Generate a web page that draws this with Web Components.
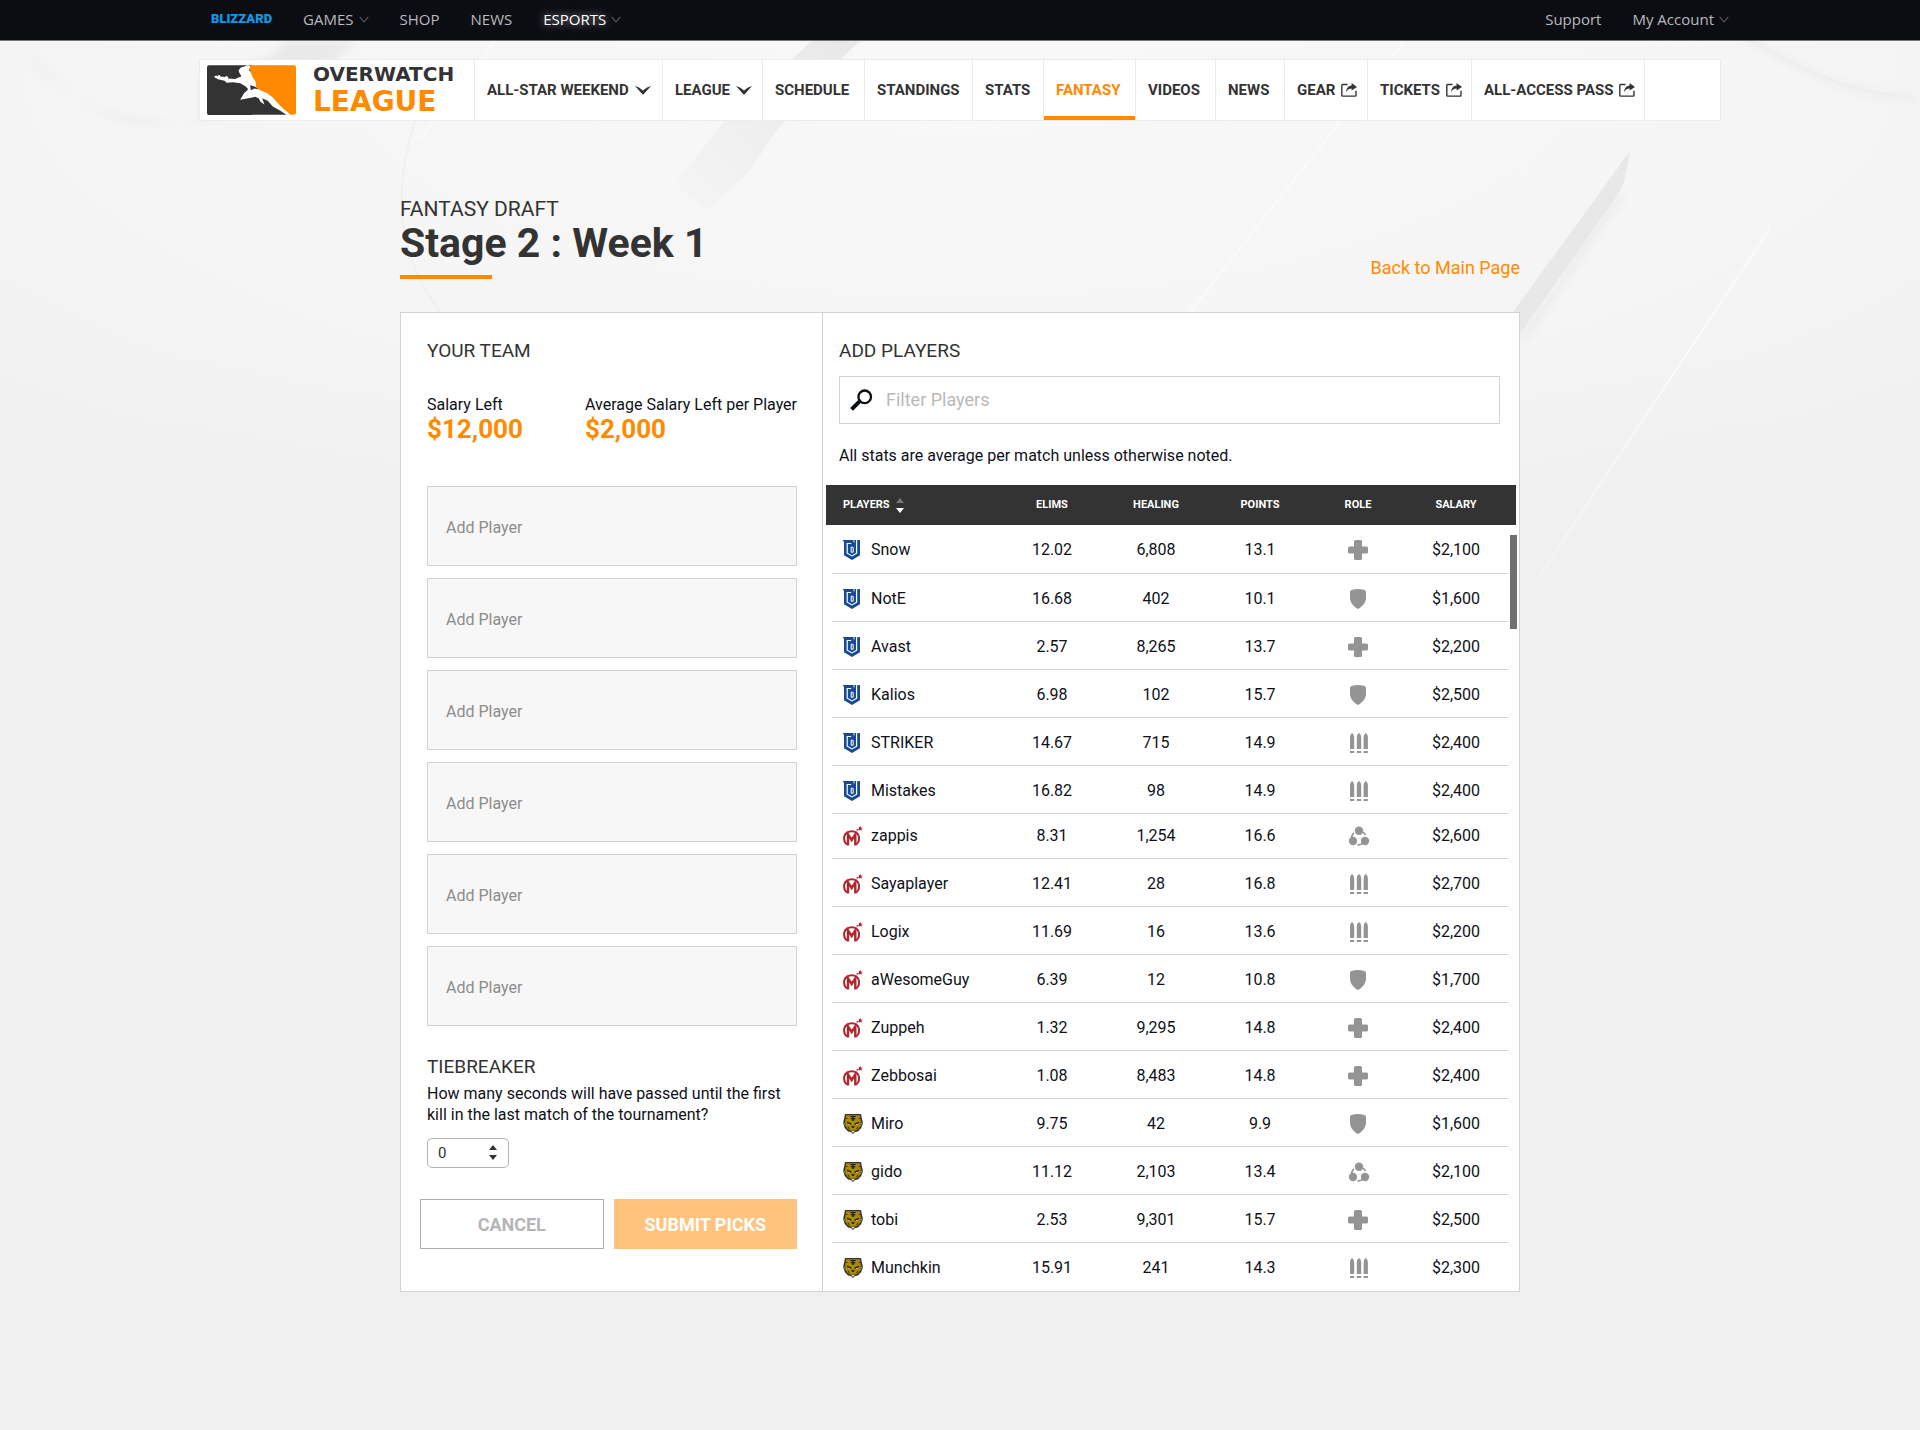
<!DOCTYPE html>
<html lang="en">
<head>
<meta charset="utf-8">
<meta name="viewport" content="width=device-width, initial-scale=1">
<title>Fantasy Draft - Overwatch League</title>
<style>
    html { background: #f0f0f0; }
    body {
        margin: 0;
        min-height: 100vh;
        font-family: Roboto, "Liberation Sans", sans-serif;
        font-size: 16px;
        line-height: 20px;
        color: #0f1118;
        --orange: #ff8a00;
        --dark: #333;
        --line: #d2d2d2;
    }
</style>
</head>
<body>
<fantasy-page></fantasy-page>

<script>
const NAV = [
    { label: "ALL-STAR WEEKEND", icon: "down" },
    { label: "LEAGUE", icon: "down" },
    { label: "SCHEDULE" },
    { label: "STANDINGS" },
    { label: "STATS" },
    { label: "FANTASY", active: true },
    { label: "VIDEOS" },
    { label: "NEWS" },
    { label: "GEAR", icon: "share" },
    { label: "TICKETS", icon: "share" },
    { label: "ALL-ACCESS PASS", icon: "share" }
];

const PLAYERS = [
    ["boston", "Snow", "12.02", "6,808", "13.1", "support", "$2,100"],
    ["boston", "NotE", "16.68", "402", "10.1", "tank", "$1,600"],
    ["boston", "Avast", "2.57", "8,265", "13.7", "support", "$2,200"],
    ["boston", "Kalios", "6.98", "102", "15.7", "tank", "$2,500"],
    ["boston", "STRIKER", "14.67", "715", "14.9", "offense", "$2,400"],
    ["boston", "Mistakes", "16.82", "98", "14.9", "offense", "$2,400"],
    ["florida", "zappis", "8.31", "1,254", "16.6", "flex", "$2,600"],
    ["florida", "Sayaplayer", "12.41", "28", "16.8", "offense", "$2,700"],
    ["florida", "Logix", "11.69", "16", "13.6", "offense", "$2,200"],
    ["florida", "aWesomeGuy", "6.39", "12", "10.8", "tank", "$1,700"],
    ["florida", "Zuppeh", "1.32", "9,295", "14.8", "support", "$2,400"],
    ["florida", "Zebbosai", "1.08", "8,483", "14.8", "support", "$2,400"],
    ["seoul", "Miro", "9.75", "42", "9.9", "tank", "$1,600"],
    ["seoul", "gido", "11.12", "2,103", "13.4", "flex", "$2,100"],
    ["seoul", "tobi", "2.53", "9,301", "15.7", "support", "$2,500"],
    ["seoul", "Munchkin", "15.91", "241", "14.3", "offense", "$2,300"]
];

const ICONS = {
    thin: `<svg width="10" height="7" viewBox="0 0 10 7"><path d="M.7.8 5 6 9.3.8" fill="none" stroke="#5a5c62" stroke-width="1.1"/></svg>`,
    down: `<svg width="16" height="9" viewBox="0 0 16 9"><path d="M0 0 4 1.4 8 4.6 12 1.4 16 0 8.4 8.6h-.8z" fill="#333"/></svg>`,
    share: `<svg width="16" height="14" viewBox="0 0 16 14"><path d="M6.500 1.500H1.600q-.8 0-.8.8v10q0 .8.8.8h12.600q.8 0 .8-.8V7.800" fill="none" stroke="#333" stroke-width="1.400"/><path d="M10.600 0 16 4l-5.400 3.600V5.600C8 5.600 6.300 6.800 5 9.200 5.200 5.600 7 2.700 10.600 2.400z" fill="#333"/></svg>`,
    search: `<svg width="23" height="22" viewBox="0 0 23 22"><g fill="none" stroke="#0b0d14"><circle cx="14.700" cy="7.800" r="6.300" stroke-width="2.300"/><path d="m9.600 12.400-8 8" stroke-width="4"/></g></svg>`,
    support: `<svg width="20" height="20" viewBox="0 0 20 20"><path d="M7.500 0h5q1.500 0 1.500 1.500V6.500h4.500Q20 6.500 20 8v4q0 1.500-1.500 1.500H14v5q0 1.500-1.500 1.500h-5Q6 20 6 18.500v-5H1.500Q0 13.500 0 12V8q0-1.500 1.500-1.500H6v-5Q6 0 7.500 0z" fill="#949494"/></svg>`,
    tank: `<svg width="20" height="20" viewBox="0 0 20 20"><path d="M2 3Q2 1.300 3.500 1 10-.8 16.500 1 18 1.300 18 3v6c0 5-4.500 9-8 11-3.500-2-8-6-8-11z" fill="#949494"/></svg>`,
    offense: `<svg width="20" height="20" viewBox="0 0 20 20"><path d="M2 16V4.500C2 2.500 3 .8 4 0c1.200.8 2.200 2.500 2.200 4.500V16zM2 18h4.200v2H2zM8.800 16V4.500c0-2 1-3.700 2.200-4.500 1.200.8 2.200 2.500 2.200 4.500V16zM8.800 18h4.400v2H8.800zM15.600 16V4.500c0-2 1-3.700 2.100-4.500 1.200.8 2.200 2.500 2.200 4.500V16zM15.600 18h4.300v2h-4.300z" fill="#949494"/></svg>`,
    flex: `<svg width="20" height="20" viewBox="0 0 20 20"><g fill="#949494"><circle cx="11" cy="4.800" r="4.200"/><circle cx="5" cy="15" r="4.200"/><circle cx="17" cy="15" r="4.200"/></g><g fill="none" stroke="#949494" stroke-width="1.700"><path d="M3.600 12q.2-3.400 2.300-5.200"/><path d="M14 5.800q2.500 1 3.400 3"/><path d="M9.600 18.800q2.400.3 4.600-1.200"/></g></svg>`,
    boston: `<svg width="18" height="20" viewBox="0 0 18 20"><path d="M0 0h17v15.200L9 20l-8-4.800V1.800L0 .8z" fill="#174b97"/><g fill="none" stroke="#fff"><path d="M13.600 0v13.200L9 15.900l-4.800-2.700V3.500h4" stroke-width="1.200"/><path d="M8.200 7v5.200h2V7.500z" stroke-width="1"/><path d="M11 0v2.500" stroke-width=".8"/></g></svg>`,
    florida: `<svg width="20" height="20" viewBox="0 0 20 20"><g fill="none" stroke="#af272f"><path d="M4.200 18.500C0 16 .2 9.200 3.800 6.800c2.900-2 7.200-2 9.700 0 3.500 2.800 3.500 9.300-.5 11.700" stroke-width="2"/><path d="M5 19.500V8.500l3.700 5.500 3.600-5.500v11" stroke-width="2.400"/><path d="m13.800 4.400 1.600-1.200" stroke-width="1.400"/></g><path d="M16 1.200 17.500 0l.3 1.500 1.900.4-1.300 1.200.4 1.600-1.700-.8-1.300.6z" fill="#af272f"/></svg>`,
    seoul: `<svg width="20" height="20" viewBox="0 0 20 20"><path d="M2 0h16l.8 4 1.200 5-1.800 5-3.200 3.500-3 .5-2 2-2-2-3-.5L1.800 14 0 9l1.200-5z" fill="#35352c"/><path d="M3 1.200h14l.6 4 .2 6-2.300 3.600-3 1.600-2.500.4-2.500-.4-3-1.600L2.200 11.200l.2-6z" fill="#aa8a00"/><g fill="#17180f"><path d="M7.300 2h5.400v1H7.300zM7.500 4.200h5v1h-5zM9.300 2h1.400v5H9.300zM4 7.500l4.700 2.200-.8 1.300-3.400-1.500zM16 7.500l-4.700 2.200.8 1.300 3.400-1.500zM8 12.300h4L10.600 14H9.400zM5 12.500l2.200 2.800-2.400-1.200zM15 12.500l-2.200 2.800 2.400-1.200zM2.500 3.500l2.300 1-2.100.6zM17.500 3.500l-2.300 1 2.100.6z"/></g><path d="m5 9.500 2.600 1-1.600.3zM15 9.500l-2.600 1 1.600.3zM8.500 17h3L10 18.800zM.9 7.500 1.900 12 .7 9zM19.100 7.500 18.100 12l1.200-3z" fill="#fff"/></svg>`
};

class UiIcon extends HTMLElement {
    constructor() {
        super();
        this.attachShadow({ mode: "open" });
    }

    connectedCallback() {
        this.shadowRoot.innerHTML = `
            <style>
                :host { display: inline-flex; flex: none; }
                svg { display: block; overflow: visible; }
            </style>
            ${ICONS[this.getAttribute("name")]}
        `;
    }
}

class PageBackdrop extends HTMLElement {
    constructor() {
        super();
        this.attachShadow({ mode: "open" });
        this.shadowRoot.innerHTML = `
            <style>
                :host { display: block; position: absolute; inset: 0; overflow: hidden; z-index: -1; }
                svg { display: block; width: 100%; }
            </style>
            <svg viewBox="0 0 1920 700" aria-hidden="true">
                <defs>
                    <radialGradient id="glow" cx=".5" cy=".1" r=".75">
                        <stop offset="0" stop-color="#f8f8f8"/>
                        <stop offset=".6" stop-color="#f5f5f5"/>
                        <stop offset="1" stop-color="#f0f0f0"/>
                    </radialGradient>
                    <linearGradient id="band" x1="1" y1="0" x2="0" y2="1">
                        <stop offset="0" stop-color="#e8e8e8"/>
                        <stop offset="1" stop-color="#f5f5f5"/>
                    </linearGradient>
                    <linearGradient id="fade" x1="0" y1="0" x2="0" y2="1">
                        <stop offset=".5" stop-color="#f0f0f0" stop-opacity="0"/>
                        <stop offset="1" stop-color="#f0f0f0"/>
                    </linearGradient>
                    <filter id="soft"><feGaussianBlur stdDeviation="4"/></filter>
                </defs>
                <rect width="1920" height="700" fill="url(#glow)"/>
                <path d="M20 41c30 55 90 85 180 82V78C250 68 275 58 285 41h70c-40 42-100 66-155 79-70 14-125-5-180-79z" fill="#e9e9e9" filter="url(#soft)"/>
                <path d="M1745 36q90 60 170 62" fill="none" stroke="#ebebeb" stroke-width="5" filter="url(#soft)"/>
                <path d="M1752 41q85 50 143 54" fill="none" stroke="#ededed" stroke-width="2"/>
                <path d="M812 41h48q-75 70-110 130l-45 40-30-27 50-64z" fill="url(#band)"/>
                <path d="M415 121c-25 75-14 140 26 192" fill="none" stroke="#f0f0f0" stroke-width="2"/>
                <path d="m1630 151-6 31-6 12-98 140-7-22z" fill="#e8e8e8"/>
                <path d="m1622 194-100 146" stroke="#e5e5e5" stroke-width="4" fill="none" filter="url(#soft)"/>
                <g fill="none" stroke="#fafafa" stroke-width="2">
                    <path d="M1405 41 1300 172 1190 312M1770 228 1537 580M495 41 420 140"/>
                </g>
                <rect width="1920" height="700" fill="url(#fade)"/>
            </svg>
        `;
    }
}

class BlizzardBar extends HTMLElement {
    constructor() {
        super();
        this.attachShadow({ mode: "open" });
        this.shadowRoot.innerHTML = `
            <style>
                :host {
                    display: block;
                    background: #0c0d13;
                    border-bottom: 1px solid #77777b;
                    font-family: "Open Sans", "Noto Sans", sans-serif;
                    font-size: 15px;
                }
                nav {
                    display: flex;
                    align-items: center;
                    height: 40px;
                    max-width: 1538px;
                    margin: 0 auto;
                    padding: 0 0 2px 20px;
                    box-sizing: border-box;
                }
                a {
                    display: flex;
                    align-items: center;
                    gap: 5px;
                    margin-right: 31px;
                    color: #b9babd;
                    text-decoration: none;
                }
                .logo {
                    font: 900 13px/28px Roboto, sans-serif;
                    color: #0d9be8;
                }
                .current { color: #fff; text-shadow: 0 0 8px #ffffffb0; }
                .right { display: flex; margin-left: auto; }
                .right a:last-child { margin-right: 0; }
            </style>
            <nav aria-label="Blizzard">
                <a class="logo" href="#">BLIZZARD</a>
                <a href="#">GAMES<ui-icon name="thin"></ui-icon></a>
                <a href="#">SHOP</a>
                <a href="#">NEWS</a>
                <a class="current" href="#">ESPORTS<ui-icon name="thin"></ui-icon></a>
                <div class="right">
                    <a href="#">Support</a>
                    <a href="#">My Account<ui-icon name="thin"></ui-icon></a>
                </div>
            </nav>
        `;
    }
}

class LeagueLogo extends HTMLElement {
    constructor() {
        super();
        this.attachShadow({ mode: "open" });
        this.shadowRoot.innerHTML = `
            <style>
                :host { display: block; }
                a { display: flex; align-items: center; gap: 17px; height: 60px; padding-left: 7px; text-decoration: none; }
                svg { display: block; flex: none; }
                .name { font: bold 20px/24px "DejaVu Sans", sans-serif; color: #333; }
                .name b { display: block; font-size: 28px; line-height: 32px; color: var(--orange); }
            </style>
            <a href="#">
                <svg width="89" height="50" viewBox="81 196 268 149" aria-hidden="true">
                    <path d="M87 196h130v150H87q-6 0-6-6V202q0-6 6-6z" fill="#333"/>
                    <path d="M217 250l113 95H190z" fill="#333"/>
                    <path d="M209 196h134q6 0 6 6v137q0 6-6 6h-13L228 262l-16-40z" fill="#ff8a00"/>
                    <path d="M102 231l6-4 6 2 1-4 5 1 1 4 14 1 4-3 6 3-1 5 22 1 19-8-6-9-3-8 7-9 13-4 9-4 6 5-3 12 5 6 5 13 9 14 2 18 15 10 19 7 16 13 14 16 18 18 12 10 10 9-10 1-21-14-23-13-15-17-17-8 7 19-12-8-5-10-10-5-14 3-32 6 11-19 13-13-7-8-17-10-22-3-19 2-6-6-20-5z" fill="#fff"/>
                    <path d="M211 256l14 4 12 9-13-3-11 5z" fill="#333"/>
                </svg>
                <span class="name">OVERWATCH<b>LEAGUE</b></span>
            </a>
        `;
    }
}

class LeagueNav extends HTMLElement {
    constructor() {
        super();
        this.attachShadow({ mode: "open" });
        this.shadowRoot.innerHTML = `
            <style>
                :host { display: block; max-width: 1522px; margin: 18px auto 0; }
                nav {
                    display: grid;
                    grid-template-columns: 275fr 188fr 100fr 102fr 108fr 71fr 92fr 80fr 69fr 83fr 104fr 173fr 75fr;
                    background: #fff;
                    border: 1px solid #ececec;
                }
                nav > * { border-right: 1px solid #ececec; min-width: 0; }
                nav > :last-child { border-right: 0; }
                .item {
                    display: flex;
                    align-items: center;
                    gap: 6px;
                    height: 60px;
                    padding-left: 12px;
                    box-sizing: border-box;
                    font-size: 15px;
                    font-weight: 700;
                    white-space: nowrap;
                    color: var(--dark);
                    text-decoration: none;
                }
                .active { color: var(--orange); box-shadow: inset 0 -4px var(--orange); }
            </style>
            <nav aria-label="Overwatch League">
                <league-logo></league-logo>
                ${NAV.map(n => `<a class="item${n.active ? " active" : ""}" href="#">${n.label}${n.icon ? `<ui-icon name="${n.icon}"></ui-icon>` : ""}</a>`).join("")}
                <span></span>
            </nav>
        `;
    }
}

class DraftHeading extends HTMLElement {
    constructor() {
        super();
        this.attachShadow({ mode: "open" });
        this.shadowRoot.innerHTML = `
            <style>
                :host { display: flex; justify-content: space-between; align-items: flex-end; color: var(--dark); }
                p { margin: 0; font-size: 21px; line-height: 24px; }
                h1 { margin: 0; font-size: 41px; line-height: 44px; }
                h1::after { content: ""; display: block; width: 92px; height: 4px; margin-top: 10px; background: var(--orange); }
                a { font-size: 18px; line-height: 22px; color: var(--orange); text-decoration: none; }
            </style>
            <div>
                <p><slot name="kicker"></slot></p>
                <h1><slot></slot></h1>
            </div>
            <a href="#"><slot name="link"></slot></a>
        `;
    }
}

class SalaryStat extends HTMLElement {
    constructor() {
        super();
        this.attachShadow({ mode: "open" });
        this.shadowRoot.innerHTML = `
            <style>
                :host { display: block; white-space: nowrap; }
                strong { display: block; font-size: 26px; line-height: 28px; color: var(--orange); }
            </style>
            <slot name="label"></slot>
            <strong><slot></slot></strong>
        `;
    }
}

class TeamPanel extends HTMLElement {
    constructor() {
        super();
        this.attachShadow({ mode: "open" });
        this.shadowRoot.innerHTML = `
            <style>
                :host { display: block; padding: 26px 25px 42px 26px; border-right: 1px solid var(--line); }
                h2 { margin: 0; font-size: 19px; line-height: 24px; font-weight: 400; color: var(--dark); }
                .salary { display: flex; justify-content: space-between; margin: 32px 0 43px; }
                .slots { display: grid; gap: 12px; margin-bottom: 29px; }
                .slots button {
                    height: 80px;
                    padding: 4px 18px 0;
                    border: 1px solid var(--line);
                    background: #f7f7f7;
                    font: inherit;
                    color: #8c8c8c;
                    text-align: left;
                }
                label { display: block; margin: 4px 0 13px; line-height: 21px; }
                .picker { position: relative; width: 82px; }
                select {
                    display: block;
                    width: 100%;
                    height: 30px;
                    padding: 0 10px;
                    border: 1px solid #b4b4b4;
                    border-radius: 5px;
                    appearance: none;
                    background: #fff;
                    font: 15px/20px Roboto, sans-serif;
                    color: var(--dark);
                }
                .picker svg { position: absolute; right: 12px; top: 7px; pointer-events: none; }
                .actions { display: flex; gap: 10px; margin: 31px 0 0 -7px; }
                .actions button {
                    flex: 1;
                    height: 50px;
                    padding: 2px 0 0;
                    border: 1px solid #adadad;
                    background: #fff;
                    font: bold 18px/20px Roboto, sans-serif;
                    color: #b5b5b5;
                }
                .actions .submit { border-color: #ffc37d; background: #ffc37d; color: #fff; }
            </style>
            <h2>YOUR TEAM</h2>
            <div class="salary">
                <salary-stat><span slot="label">Salary Left</span>$12,000</salary-stat>
                <salary-stat><span slot="label">Average Salary Left per Player</span>$2,000</salary-stat>
            </div>
            <div class="slots">${`<button type="button">Add Player</button>`.repeat(6)}</div>
            <h2>TIEBREAKER</h2>
            <label for="seconds">How many seconds will have passed until the first kill in the last match of the tournament?</label>
            <div class="picker">
                <select id="seconds"><option>0</option></select>
                <svg width="8" height="15" viewBox="0 0 8 15" aria-hidden="true"><path d="M0 5 4 0l4 5zM0 10h8l-4 5z" fill="#333"/></svg>
            </div>
            <div class="actions">
                <button type="button">CANCEL</button>
                <button type="submit" class="submit">SUBMIT PICKS</button>
            </div>
        `;
    }
}

class PlayerTable extends HTMLElement {
    constructor() {
        super();
        this.attachShadow({ mode: "open" });
        this.shadowRoot.innerHTML = `
            <style>
                :host { display: block; position: relative; margin: 19px 11px 0 9px; }
                table { width: 100%; table-layout: fixed; border-collapse: separate; border-spacing: 0; }
                .num { width: 104px; }
                .role { width: 92px; }
                th {
                    height: 40px;
                    padding: 0;
                    background: var(--dark);
                    font-size: 11px;
                    color: #fff;
                }
                th:first-child { text-align: left; box-shadow: -6px 0 var(--dark); }
                th:last-child { box-shadow: 8px 0 var(--dark); }
                th button {
                    display: flex;
                    align-items: center;
                    gap: 6px;
                    padding: 0 0 0 11px;
                    border: 0;
                    background: none;
                    font: inherit;
                    color: inherit;
                }
                td {
                    height: 48px;
                    padding: 2px 0 0;
                    box-sizing: border-box;
                    border-bottom: 1px solid var(--line);
                    text-align: center;
                }
                tr:first-child td { height: 49px; }
                .first td { height: 45px; padding: 0; }
                tr:last-child td { border-bottom: 0; }
                td:last-child { padding-right: 28px; text-align: right; }
                .player { display: flex; align-items: center; gap: 8px; padding-left: 11px; }
                .player ui-icon { width: 20px; }
                td > ui-icon { vertical-align: middle; }
                .thumb { position: absolute; right: -9px; top: 50px; width: 7px; height: 94px; background: #707070; }
            </style>
            <table>
                <colgroup><col><col class="num"><col class="num"><col class="num"><col class="role"><col class="num"></colgroup>
                <thead>
                    <tr>
                        <th><button type="button">PLAYERS
                            <svg width="8" height="15" viewBox="0 0 8 15" aria-hidden="true"><path d="M0 5 4 0l4 5z" fill="#777"/><path d="M0 10h8l-4 5z" fill="#fff"/></svg>
                        </button></th>
                        <th>ELIMS</th><th>HEALING</th><th>POINTS</th><th>ROLE</th><th>SALARY</th>
                    </tr>
                </thead>
                <tbody>${PLAYERS.map(this.row).join("")}</tbody>
            </table>
            <div class="thumb"></div>
        `;
    }

    row([team, name, elims, healing, points, role, salary]) {
        return `<tr class="${name === "zappis" ? "first" : ""}">
            <td><div class="player"><ui-icon name="${team}"></ui-icon>${name}</div></td>
            <td>${elims}</td><td>${healing}</td><td>${points}</td>
            <td><ui-icon name="${role}"></ui-icon></td>
            <td>${salary}</td>
        </tr>`;
    }
}

class PlayerPicker extends HTMLElement {
    constructor() {
        super();
        this.attachShadow({ mode: "open" });
        this.shadowRoot.innerHTML = `
            <style>
                :host { display: block; padding-top: 26px; min-width: 0; }
                h2 { margin: 0 16px; font-size: 19px; line-height: 24px; font-weight: 400; color: var(--dark); }
                .search {
                    display: flex;
                    align-items: center;
                    gap: 13px;
                    height: 48px;
                    margin: 13px 19px 22px 16px;
                    padding: 0 10px;
                    box-sizing: border-box;
                    border: 1px solid var(--line);
                }
                input { flex: 1; min-width: 0; padding: 0; border: 0; outline: 0; background: none; font: inherit; font-size: 18px; }
                input::placeholder { color: #b9b9b9; }
                p { margin: 0 16px; }
            </style>
            <h2>ADD PLAYERS</h2>
            <label class="search">
                <ui-icon name="search"></ui-icon>
                <input type="text" placeholder="Filter Players" aria-label="Filter Players">
            </label>
            <p>All stats are average per match unless otherwise noted.</p>
            <player-table></player-table>
        `;
    }
}

class FantasyPage extends HTMLElement {
    constructor() {
        super();
        this.attachShadow({ mode: "open" });
        this.shadowRoot.innerHTML = `
            <style>
                :host { display: block; position: relative; z-index: 0; min-height: 100vh; }
                main { max-width: 1120px; margin: 76px auto 0; }
                .panel {
                    display: grid;
                    grid-template-columns: 422px 1fr;
                    margin-top: 33px;
                    background: #fff;
                    border: 1px solid var(--line);
                }
            </style>
            <page-backdrop></page-backdrop>
            <blizzard-bar></blizzard-bar>
            <league-nav></league-nav>
            <main>
                <draft-heading>
                    <span slot="kicker">FANTASY DRAFT</span>
                    Stage 2 : Week 1
                    <span slot="link">Back to Main Page</span>
                </draft-heading>
                <div class="panel">
                    <team-panel></team-panel>
                    <player-picker></player-picker>
                </div>
            </main>
        `;
    }
}

customElements.define("ui-icon", UiIcon);
customElements.define("page-backdrop", PageBackdrop);
customElements.define("blizzard-bar", BlizzardBar);
customElements.define("league-logo", LeagueLogo);
customElements.define("league-nav", LeagueNav);
customElements.define("draft-heading", DraftHeading);
customElements.define("salary-stat", SalaryStat);
customElements.define("team-panel", TeamPanel);
customElements.define("player-table", PlayerTable);
customElements.define("player-picker", PlayerPicker);
customElements.define("fantasy-page", FantasyPage);
</script>
</body>
</html>
